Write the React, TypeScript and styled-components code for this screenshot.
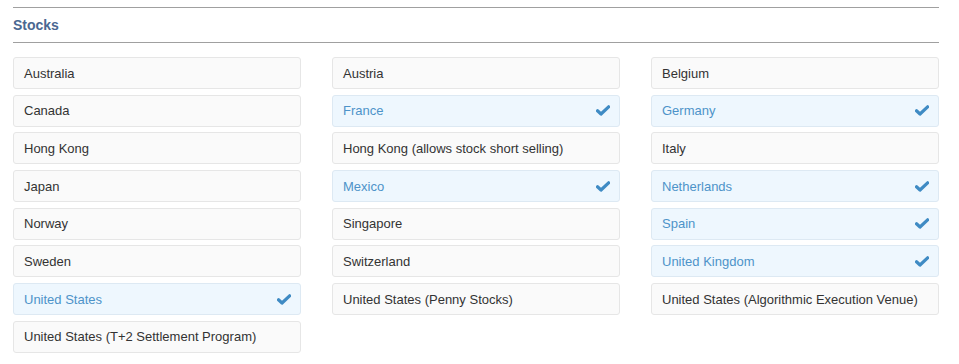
import React from "react";
import styled, { createGlobalStyle } from "styled-components";

const GlobalStyle = createGlobalStyle`
    body {
        margin: 0;
        background: #ffffff;
        font-family: "Liberation Sans", Arial, sans-serif;
    }
`;

const Page = styled.div`
    width: 926px;
    padding: 7px 0 0 13px;
`;

const Header = styled.div`
    border-top: 1px solid #a0a0a0;
    border-bottom: 1px solid #a0a0a0;
    height: 34px;
    display: flex;
    align-items: center;
    margin-bottom: 14px;
`;

const Title = styled.h3`
    margin: 0;
    font-size: 14px;
    font-weight: bold;
    color: #4a6791;
`;

const Grid = styled.div`
    display: grid;
    grid-template-columns: repeat(3, 288px);
    column-gap: 31px;
    row-gap: 5.7px;
`;

const Card = styled.div<{ $selected?: boolean }>`
    height: 32px;
    box-sizing: border-box;
    display: flex;
    align-items: center;
    justify-content: space-between;
    padding: 0 9px 0 10px;
    border: 1px solid ${p => (p.$selected ? "#dde9f3" : "#e6e6e6")};
    border-radius: 3px;
    background: ${p => (p.$selected ? "#eef7fe" : "#fafafa")};
    color: ${p => (p.$selected ? "#4d93c9" : "#333333")};
    font-size: 13px;
`;

const Check = () => (
    <svg width="14" height="11" viewBox="0 0 14 11">
        <path d="M1.5 5.8 L5 9 L12.6 1.8" fill="none" stroke="#3f8bc4" strokeWidth="3.2" strokeLinejoin="round" strokeLinecap="round" />
    </svg>
);

const markets: { name: string; selected?: boolean }[] = [
    { name: "Australia" },
    { name: "Austria" },
    { name: "Belgium" },
    { name: "Canada" },
    { name: "France", selected: true },
    { name: "Germany", selected: true },
    { name: "Hong Kong" },
    { name: "Hong Kong (allows stock short selling)" },
    { name: "Italy" },
    { name: "Japan" },
    { name: "Mexico", selected: true },
    { name: "Netherlands", selected: true },
    { name: "Norway" },
    { name: "Singapore" },
    { name: "Spain", selected: true },
    { name: "Sweden" },
    { name: "Switzerland" },
    { name: "United Kingdom", selected: true },
    { name: "United States", selected: true },
    { name: "United States (Penny Stocks)" },
    { name: "United States (Algorithmic Execution Venue)" },
    { name: "United States (T+2 Settlement Program)" },
];

export default function App() {
    return (
        <Page>
            <GlobalStyle />
            <Header>
                <Title>Stocks</Title>
            </Header>
            <Grid>
                {markets.map(m => (
                    <Card key={m.name} $selected={m.selected}>
                        <span>{m.name}</span>
                        {m.selected && <Check />}
                    </Card>
                ))}
            </Grid>
        </Page>
    );
}
